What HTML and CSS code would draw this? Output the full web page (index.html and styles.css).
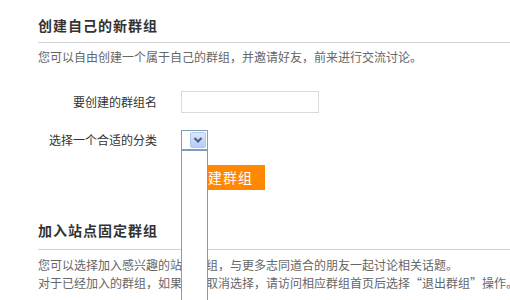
FILE: index.html
```html
<!DOCTYPE html>
<html lang="zh-CN">
<head>
    <meta charset="UTF-8">
    <title>群组</title>
    <link rel="stylesheet" href="styles.css">
</head>
<body>
<div class="page">
    <!-- 创建群组 -->
    <div class="block">
        <h2 class="block__title">创建自己的新群组</h2>
        <p class="block__desc">您可以自由创建一个属于自己的群组，并邀请好友，前来进行交流讨论。</p>

        <form class="form">
            <div class="form__row form__row--name">
                <label class="form__label">要创建的群组名</label>
                <input type="text" class="input">
            </div>
            <div class="form__row form__row--type">
                <label class="form__label">选择一个合适的分类</label>
                <div class="select">
                    <span class="select__arrow">
                        <svg width="14" height="14" viewBox="0 0 14 14">
                            <polyline points="3.5,5 7,8.5 10.5,5" fill="none" stroke="#4d6185" stroke-width="2.2"/>
                        </svg>
                    </span>
                    <div class="select__list"></div>
                </div>
            </div>
            <div class="form__row form__row--submit">
                <span class="form__label"></span>
                <button class="btn" type="button">创建群组</button>
            </div>
        </form>
    </div>

    <!-- 站点群组 -->
    <div class="block block--join">
        <h2 class="block__title">加入站点固定群组</h2>
        <p class="block__desc">您可以选择加入感兴趣的站点群组，与更多志同道合的朋友一起讨论相关话题。</p>
        <p class="block__desc">对于已经加入的群组，如果想要取消选择，请访问相应群组首页后选择“退出群组”操作。</p>
    </div>
</div>
</body>
</html>
```

FILE: styles.css
```css
:root {
    --text: #333;
    --muted: #666;
    --line: #d2d2d2;
    --orange: #ff8800;
    --xp-border: #7f9db9;

    font-family: "Noto Sans CJK SC", "Liberation Sans", sans-serif;
    font-size: 12px;
}

html,
body {
    margin: 0;
    background: #fff;
    overflow: hidden;
}

.page {
    width: 510px;
    height: 300px;
    overflow: hidden;
}

.block {
    padding-left: 38px;
}

.block__title {
    margin: 15px 0 0;
    padding-bottom: 7px;
    border-bottom: 1px solid var(--line);
    color: var(--text);
    font-size: 14px;
    font-weight: bold;
    letter-spacing: 1px;
    line-height: 20px;
}

.block--join .block__title {
    margin-top: 30px;
    padding-bottom: 9px;
}

.block__desc {
    margin: 0;
    color: var(--muted);
    line-height: 18px;
    white-space: nowrap;
}

.block__title + .block__desc {
    margin-top: 5px;
}

.block--join .block__title + .block__desc {
    margin-top: 6px;
}

.form {
    display: flex;
    flex-direction: column;
}

.form__row {
    display: flex;
    align-items: center;
    gap: 24px;
}

.form__row--name {
    margin-top: 25px;
}

.form__row--type {
    margin-top: 17px;
}

.form__row--submit {
    margin-top: 15px;
}

.form__label {
    width: 119px;
    flex: none;
    color: var(--text);
    text-align: right;
    line-height: 18px;
}

.input {
    box-sizing: border-box;
    width: 138px;
    height: 22px;
    margin: 0;
    padding: 0 4px;
    border: 1px solid #dadada;
    outline: none;
}

/* open select, drawn like the old xp control */
.select {
    position: relative;
    box-sizing: border-box;
    width: 27px;
    height: 20px;
    border: 1px solid var(--xp-border);
    background: #fff;
    display: flex;
    justify-content: flex-end;
    align-items: center;
    padding-right: 1px;
    z-index: 5;
}

.select__arrow {
    box-sizing: border-box;
    width: 16px;
    height: 16px;
    border: 1px solid #b3c7ee;
    border-radius: 2px;
    background: linear-gradient(180deg, #dde8fd 0%, #c3d5fb 60%, #b6cbf7 100%);
    display: flex;
    align-items: center;
    justify-content: center;
}

.select__list {
    position: absolute;
    top: 18px;
    left: -1px;
    box-sizing: border-box;
    width: 27px;
    height: 160px;
    border: 1px solid var(--xp-border);
    border-top-width: 2px;
    background: #fff;
}

.btn {
    width: 84px;
    height: 25px;
    margin: 0;
    padding: 0;
    border: none;
    background-color: var(--orange);
    color: #fff;
    font-family: inherit;
    font-size: 14px;
    line-height: 25px;
    letter-spacing: 1px;
    cursor: pointer;
}
```
